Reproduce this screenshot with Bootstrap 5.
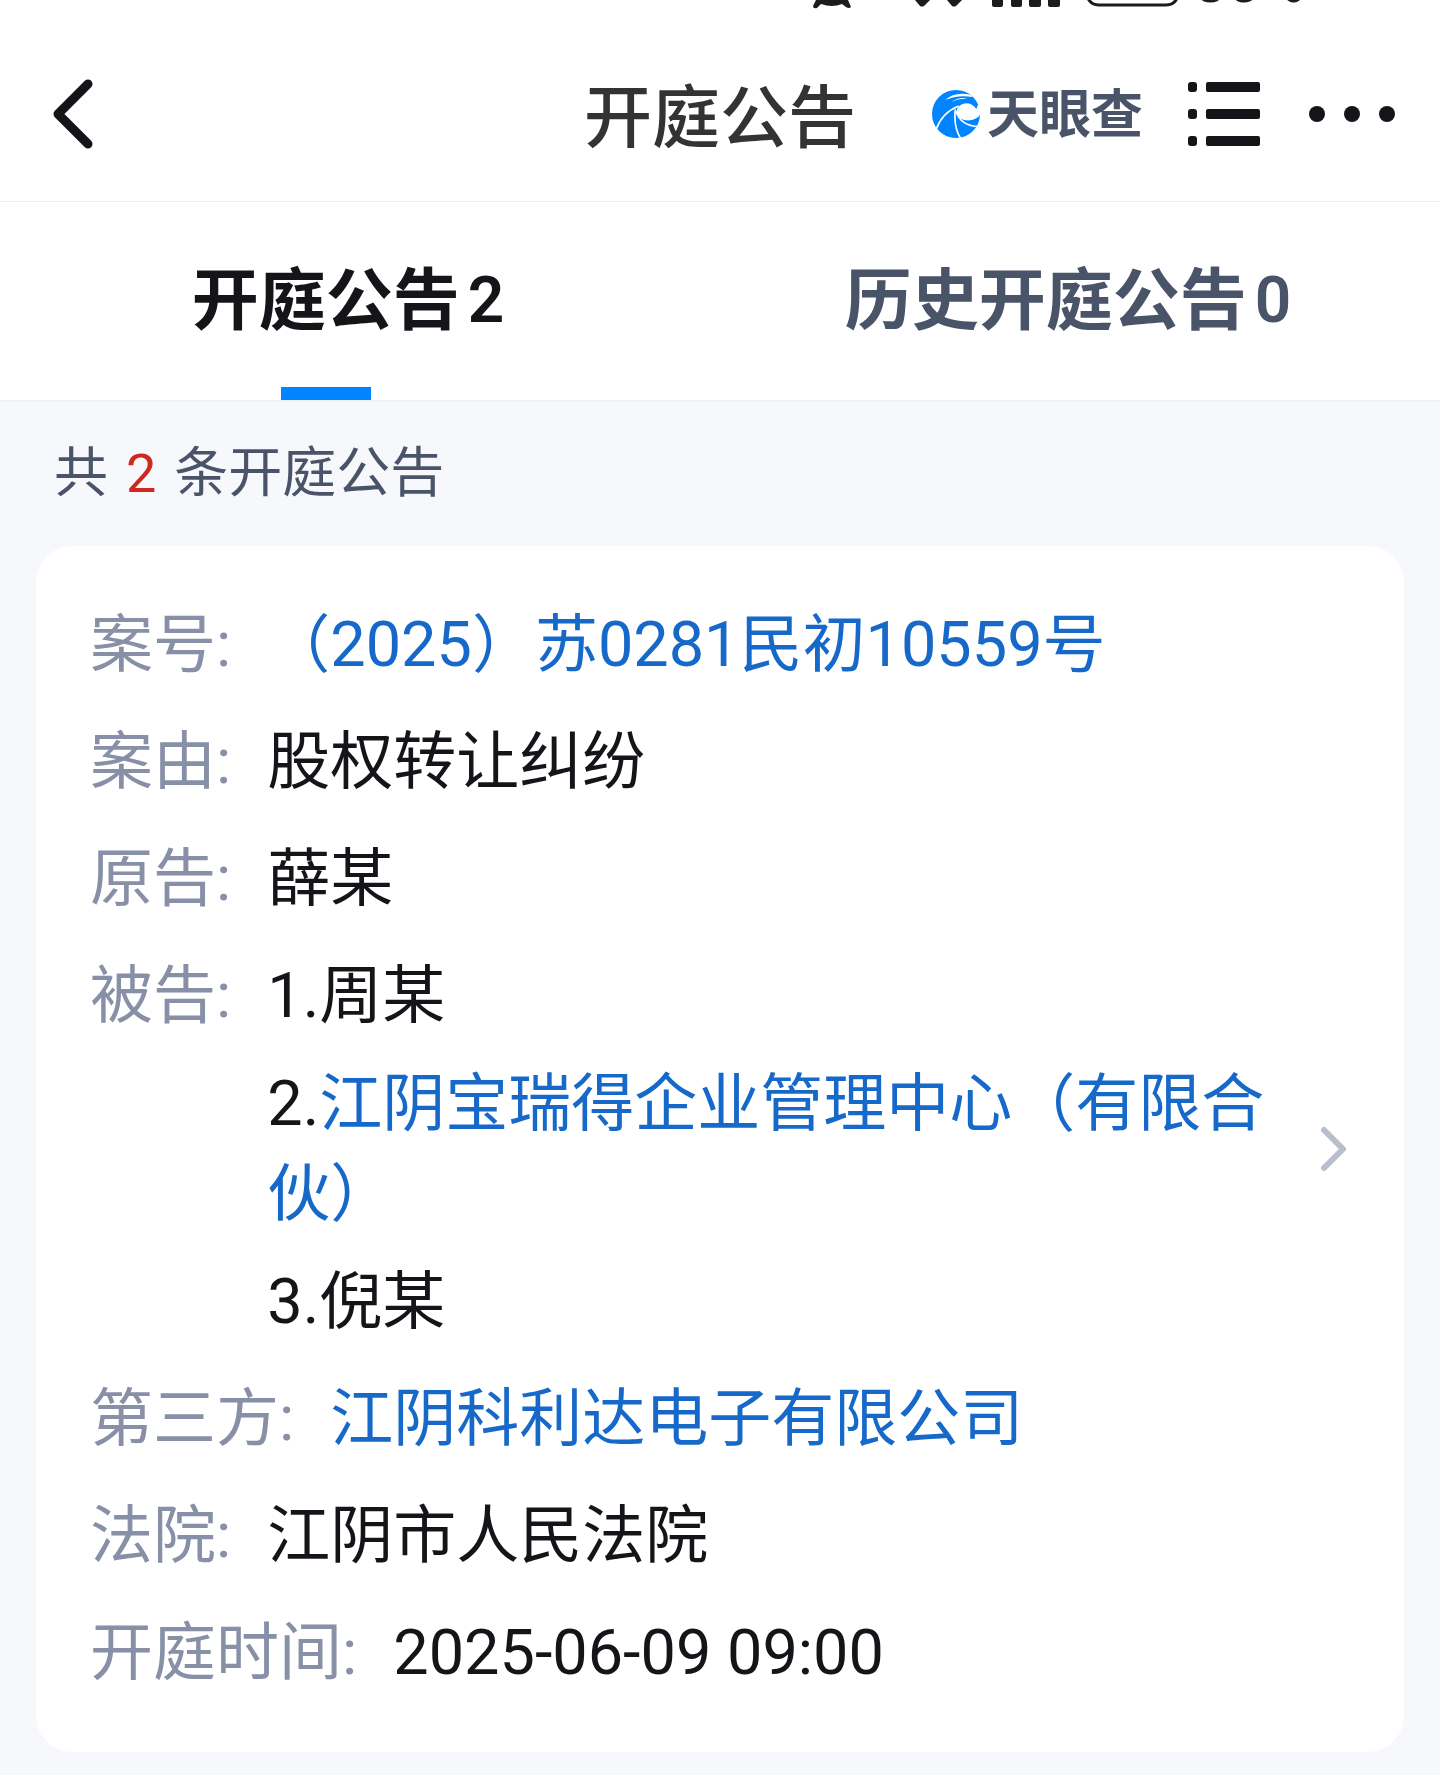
<!DOCTYPE html>
<html lang="zh-CN">
<head>
<meta charset="utf-8">
<meta name="viewport" content="width=device-width, initial-scale=1">
<title>开庭公告</title>
<link href="https://cdn.jsdelivr.net/npm/bootstrap@5.3.0/dist/css/bootstrap.min.css" rel="stylesheet">
<style>
  body { font-family: Roboto, "Noto Sans CJK SC", sans-serif; background: #f6f8fc; color: #141519; }
  a { color: #1669c9; text-decoration: none; }
  svg { display: block; flex: none; }
  .status-strip { height: 27px; padding-right: 135px; }
  .status-level { font-size: 60px; line-height: 60px; height: 60px; margin: -48px 0 0 3px; color: #1c1c1c; }
  .app-bar { height: 175px; padding: 0 43px; border-bottom: 1px solid #eee; }
  .side { flex: 1 1 0; }
  .page-title { font-size: 68px; line-height: 90px; padding-top: 10px; font-weight: 500; color: #333; }
  .brand-word { font-size: 52px; line-height: 60px; padding-top: 3px; font-weight: 700; color: #4a5468; margin-left: 6px; }
  .icon-btn { border: 0; background: none; padding: 0; }
  .back-btn { margin-left: 8px; }
  .bar-action { margin-left: 45px; }
  .tab-strip { border-bottom: 2px solid #edf0f4; }
  .tab-link { flex: 1 1 0; height: 198px; padding-right: 24px; font-size: 67px; line-height: 90px; font-weight: 600; color: #4a5468; }
  .tab-link .num { font-size: 64px; margin-left: 8px; }
  .tab-link.active { color: #141519; }
  .tab-link.active::after { content: ""; position: absolute; left: 39%; bottom: 0; width: 90px; height: 13px; background: #0084ff; }
  .summary { padding: 36px 54px; font-size: 54px; line-height: 72px; color: #4a5468; }
  .summary .hits { color: #d0281c; margin: 0 18px; }
  .case-card { margin: 0 36px 23px; padding: 54px; border: 0; border-radius: 36px; font-size: 63px; line-height: 90px; }
  .case-rows { gap: 27px; }
  .case-row { gap: 36px; }
  .case-row dt { font-weight: 400; color: #8790a6; white-space: nowrap; }
  .party-list { gap: 18px; }
</style>
<script src="https://cdn.jsdelivr.net/npm/bootstrap@5.3.0/dist/js/bootstrap.bundle.min.js"></script>
</head>
<body>
<header class="bg-white">
  <div class="status-strip d-flex justify-content-end overflow-hidden">
    <svg width="380" height="27" viewBox="810 0 380 27" fill="#1c1c1c" aria-hidden="true">
      <path d="M815 0H847L850 7Q848 9 845 7L841 4Q831 8 820 4L816 8Q812 9 812 6Z"/>
      <path d="M914 0H929L923 6Q921 7 919 6ZM946 0H961L955 6Q953 7 951 6Z"/>
      <path d="M991 0H1002V5Q1002 7 1000 7H993Q991 7 991 5ZM1010 0H1021V5Q1021 7 1019 7H1012Q1010 7 1010 5ZM1028 0H1040V5Q1040 7 1038 7H1030Q1028 7 1028 5ZM1047 0H1059V5Q1059 7 1057 7H1049Q1047 7 1047 5Z"/>
      <path d="M1086-4Q1089 5 1098 5H1165Q1174 5 1177-4" fill="none" stroke="#1c1c1c" stroke-width="3"/>
    </svg>
    <span class="status-level">80%</span>
  </div>
  <div class="app-bar d-flex align-items-center">
    <div class="side d-flex">
      <button type="button" class="icon-btn back-btn" aria-label="返回">
        <svg width="44" height="72" viewBox="0 0 44 72"><path d="M37 6L7 36L37 66" fill="none" stroke="#141519" stroke-width="9" stroke-linejoin="round" stroke-linecap="round"/></svg>
      </button>
    </div>
    <h1 class="page-title mb-0">开庭公告</h1>
    <div class="side d-flex align-items-center justify-content-end">
      <a href="#" class="d-flex align-items-center">
        <svg width="50" height="50" viewBox="33 27 150 150" aria-hidden="true">
          <circle cx="108" cy="102" r="72" fill="#0084ff"/>
          <path d="M174 74L169 87Q158 70 138 70Q115 72 110 92Q109 108 122 117Q138 126 156 121Q174 116 183 100L184 74Z" fill="#fff"/>
          <path d="M118 113Q142 130 178 112L173 127Q140 136 118 113Z" fill="#0084ff"/>
          <path d="M76 60Q104 34 151 44L158 51Q112 43 76 60ZM94 66Q118 50 142 56Q114 55 94 66Z" fill="#fff"/>
          <path d="M48 149Q66 98 116 78M106 88Q100 140 122 176M108 94Q122 138 176 140" fill="none" stroke="#fff" stroke-width="5"/>
        </svg>
        <span class="brand-word">天眼查</span>
      </a>
      <button type="button" class="icon-btn bar-action" aria-label="目录">
        <svg width="74" height="66" viewBox="0 0 74 66" fill="#141519"><rect x="0" y="1" width="9" height="10" rx="3"/><rect x="0" y="28" width="9" height="10" rx="3"/><rect x="0" y="55" width="9" height="10" rx="3"/><rect x="18" y="1" width="54" height="10" rx="2"/><rect x="18" y="28" width="54" height="10" rx="2"/><rect x="18" y="55" width="54" height="10" rx="2"/></svg>
      </button>
      <button type="button" class="icon-btn bar-action" aria-label="更多">
        <svg width="90" height="20" viewBox="0 0 90 20" fill="#141519"><circle cx="10" cy="10" r="8"/><circle cx="45" cy="10" r="8"/><circle cx="80" cy="10" r="8"/></svg>
      </button>
    </div>
  </div>
  <nav class="tab-strip d-flex">
    <a href="#" class="tab-link active position-relative d-flex align-items-center justify-content-center" aria-current="page">开庭公告<span class="num">2</span></a>
    <a href="#" class="tab-link d-flex align-items-center justify-content-center">历史开庭公告<span class="num">0</span></a>
  </nav>
</header>
<main>
  <p class="summary m-0 d-flex">共<span class="hits">2</span>条开庭公告</p>
  <article class="case-card bg-white d-flex align-items-center">
    <dl class="case-rows d-flex flex-column flex-grow-1 m-0">
      <div class="case-row d-flex"><dt>案号:</dt><dd class="m-0"><a href="#">（2025）苏0281民初10559号</a></dd></div>
      <div class="case-row d-flex"><dt>案由:</dt><dd class="m-0">股权转让纠纷</dd></div>
      <div class="case-row d-flex"><dt>原告:</dt><dd class="m-0">薛某</dd></div>
      <div class="case-row d-flex"><dt>被告:</dt><dd class="party-list m-0 d-flex flex-column">
        <div>1.周某</div>
        <div>2.<a href="#">江阴宝瑞得企业管理中心（有限合伙）</a></div>
        <div>3.倪某</div>
      </dd></div>
      <div class="case-row d-flex"><dt>第三方:</dt><dd class="m-0"><a href="#">江阴科利达电子有限公司</a></dd></div>
      <div class="case-row d-flex"><dt>法院:</dt><dd class="m-0">江阴市人民法院</dd></div>
      <div class="case-row d-flex"><dt>开庭时间:</dt><dd class="m-0">2025-06-09 09:00</dd></div>
    </dl>
    <button type="button" class="icon-btn ms-5" aria-label="查看详情">
      <svg width="32" height="50" viewBox="0 0 32 50"><path d="M6 6L25 25L6 44" fill="none" stroke="#b7bfcd" stroke-width="6" stroke-linecap="round" stroke-linejoin="round"/></svg>
    </button>
  </article>
</main>
</body>
</html>
